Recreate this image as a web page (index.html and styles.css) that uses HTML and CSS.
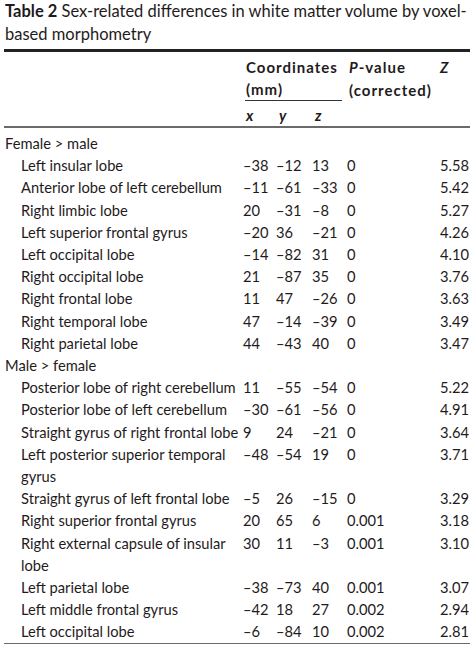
FILE: index.html
```html
<!DOCTYPE html>
<html>
<head>
<meta charset="utf-8">
<link rel="stylesheet" href="styles.css">
</head>
<body>
<div class="page">
  <p class="caption"><b class="cap-no">Table 2</b> <span class="cap-text">Sex-related differences in white matter volume by voxel-based morphometry</span></p>
  <table class="tbl">
    <colgroup>
      <col class="c-label"><col class="c-x"><col class="c-y"><col class="c-z"><col class="c-p"><col class="c-zv">
    </colgroup>
    <thead>
      <tr class="h1">
        <th></th>
        <th colspan="3" class="hc">Coordinates</th>
        <th class="hp"><i>P</i>-value</th>
        <th class="hz"><i>Z</i></th>
      </tr>
      <tr class="h2">
        <th></th>
        <th colspan="3" class="hc"><div class="mm">(mm)</div></th>
        <th class="hp">(corrected)</th>
        <th></th>
      </tr>
      <tr class="h3">
        <th></th>
        <th class="hc"><i>x</i></th>
        <th class="hc"><i>y</i></th>
        <th class="hc"><i>z</i></th>
        <th></th>
        <th></th>
      </tr>
    </thead>
    <tbody>
      <tr class="grp first"><td colspan="6">Female &gt; male</td></tr>
      <tr><td class="lbl">Left insular lobe</td><td>–38</td><td>–12</td><td>13</td><td>0</td><td class="zv">5.58</td></tr>
      <tr><td class="lbl">Anterior lobe of left cerebellum</td><td>–11</td><td>–61</td><td>–33</td><td>0</td><td class="zv">5.42</td></tr>
      <tr><td class="lbl">Right limbic lobe</td><td>20</td><td>–31</td><td>–8</td><td>0</td><td class="zv">5.27</td></tr>
      <tr><td class="lbl">Left superior frontal gyrus</td><td>–20</td><td>36</td><td>–21</td><td>0</td><td class="zv">4.26</td></tr>
      <tr><td class="lbl">Left occipital lobe</td><td>–14</td><td>–82</td><td>31</td><td>0</td><td class="zv">4.10</td></tr>
      <tr><td class="lbl">Right occipital lobe</td><td>21</td><td>–87</td><td>35</td><td>0</td><td class="zv">3.76</td></tr>
      <tr><td class="lbl">Right frontal lobe</td><td>11</td><td>47</td><td>–26</td><td>0</td><td class="zv">3.63</td></tr>
      <tr><td class="lbl">Right temporal lobe</td><td>47</td><td>–14</td><td>–39</td><td>0</td><td class="zv">3.49</td></tr>
      <tr><td class="lbl">Right parietal lobe</td><td>44</td><td>–43</td><td>40</td><td>0</td><td class="zv">3.47</td></tr>
      <tr class="grp"><td colspan="6">Male &gt; female</td></tr>
      <tr><td class="lbl">Posterior lobe of right cerebellum</td><td>11</td><td>–55</td><td>–54</td><td>0</td><td class="zv">5.22</td></tr>
      <tr><td class="lbl">Posterior lobe of left cerebellum</td><td>–30</td><td>–61</td><td>–56</td><td>0</td><td class="zv">4.91</td></tr>
      <tr><td class="lbl">Straight gyrus of right frontal lobe</td><td>9</td><td>24</td><td>–21</td><td>0</td><td class="zv">3.64</td></tr>
      <tr><td class="lbl">Left posterior superior temporal<br>gyrus</td><td>–48</td><td>–54</td><td>19</td><td>0</td><td class="zv">3.71</td></tr>
      <tr><td class="lbl">Straight gyrus of left frontal lobe</td><td>–5</td><td>26</td><td>–15</td><td>0</td><td class="zv">3.29</td></tr>
      <tr><td class="lbl">Right superior frontal gyrus</td><td>20</td><td>65</td><td>6</td><td>0.001</td><td class="zv">3.18</td></tr>
      <tr><td class="lbl">Right external capsule of insular<br>lobe</td><td>30</td><td>11</td><td>–3</td><td>0.001</td><td class="zv">3.10</td></tr>
      <tr><td class="lbl">Left parietal lobe</td><td>–38</td><td>–73</td><td>40</td><td>0.001</td><td class="zv">3.07</td></tr>
      <tr><td class="lbl">Left middle frontal gyrus</td><td>–42</td><td>18</td><td>27</td><td>0.002</td><td class="zv">2.94</td></tr>
      <tr class="last"><td class="lbl">Left occipital lobe</td><td>–6</td><td>–84</td><td>10</td><td>0.002</td><td class="zv">2.81</td></tr>
    </tbody>
  </table>
</div>
</body>
</html>
```

FILE: styles.css
```css
html, body {
  margin: 0;
  padding: 0;
  background: #ffffff;
}

.page {
  padding: 0 4px;
  font-family: Lato, "Liberation Sans", sans-serif;
  color: #1f1b1c;
}

.caption {
  margin: 0;
  font-size: 16.5px;
  line-height: 23px;
  padding-left: 1px;
  height: 46px;
}

.cap-no {
  font-weight: 700;
}

.tbl {
  width: 466px;
  border-collapse: collapse;
  table-layout: fixed;
  margin-top: 3px;
  border-top: 3.5px solid #222;
  border-bottom: 1.5px solid #6a6a6a;
  font-size: 14.7px;
}

.c-label { width: 239px; }
.c-x { width: 33px; }
.c-y { width: 36px; }
.c-z { width: 35px; }
.c-p { width: 93px; }
.c-zv { width: 30px; }

.tbl th {
  font-weight: 700;
  font-size: 15px;
  text-align: left;
  padding: 0;
  line-height: 22px;
  letter-spacing: 1px;
}

.tbl th.hc { padding-left: 3px; }
.tbl th.hp { padding-left: 2px; }
.tbl th.hz { padding-left: 0; }

.h1 th { padding-top: 4px; }

.mm {
  border-bottom: 1px solid #333;
  margin-right: 5px;
  margin-left: -1px;
  padding-left: 1px;
}

.h3 th {
  padding-top: 3px;
  border-bottom: 2px solid #6a6a6a;
}

.tbl td {
  padding: 0;
  line-height: 22.2px;
  vertical-align: top;
  white-space: nowrap;
}

.tbl td.lbl {
  padding-left: 17px;
}

.grp td {
  padding-left: 1px;
}

.grp.first td {
  padding-top: 4px;
}

.tbl td.zv {
  text-align: right;
  padding-right: 2px;
}

.last td {
  padding-bottom: 0;
}
```
